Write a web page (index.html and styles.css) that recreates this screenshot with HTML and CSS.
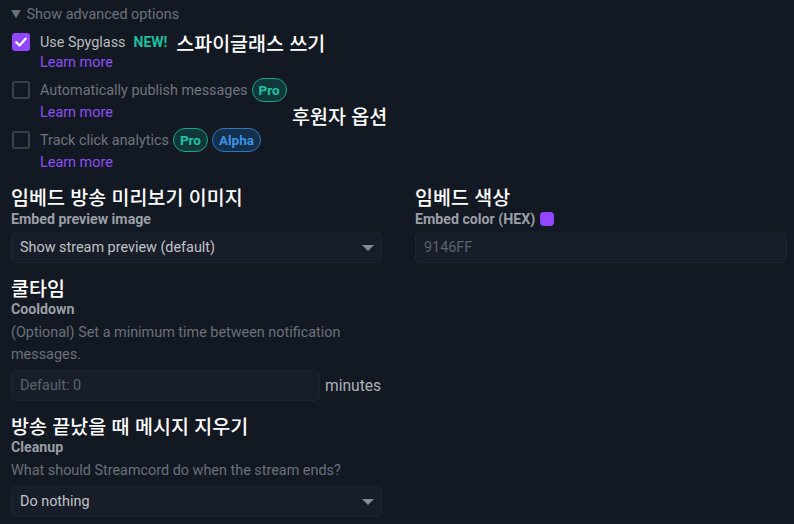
FILE: index.html
```html
<!DOCTYPE html>
<html lang="ko">
<head>
<meta charset="utf-8">
<link rel="stylesheet" href="styles.css">
</head>
<body>
<div class="page">
  <div class="adv-toggle"><span class="tri">▼</span> Show advanced options</div>

  <div class="options">
    <div class="opt">
      <div class="opt-line">
        <span class="cb checked"><svg viewBox="0 0 18 18" width="18" height="18"><path d="M4.2 9.2 L7.6 12.4 L13.8 5.6" fill="none" stroke="#fff" stroke-width="2.2" stroke-linecap="round" stroke-linejoin="round"/></svg></span>
        <span class="opt-label on">Use Spyglass</span>
        <span class="new">NEW!</span>
        <span class="ko-note">스파이글래스 쓰기</span>
      </div>
      <a class="learn">Learn more</a>
    </div>
    <div class="opt">
      <div class="opt-line tall">
        <span class="cb"></span>
        <span class="opt-label">Automatically publish messages</span>
        <span class="badge pro">Pro</span>
      </div>
      <a class="learn">Learn more</a>
    </div>
    <div class="opt">
      <div class="opt-line tall">
        <span class="cb"></span>
        <span class="opt-label">Track click analytics</span>
        <span class="badge pro">Pro</span>
        <span class="badge alpha">Alpha</span>
      </div>
      <a class="learn">Learn more</a>
    </div>
    <span class="ko-float">후원자 옵션</span>
  </div>

  <div class="grid">
    <div class="field">
      <div class="ko-head">임베드 방송 미리보기 이미지</div>
      <div class="label">Embed preview image</div>
      <div class="select"><span>Show stream preview (default)</span><span class="caret"></span></div>
    </div>
    <div class="field">
      <div class="ko-head">임베드 색상</div>
      <div class="label">Embed color (HEX) <span class="swatch"></span></div>
      <div class="input"><span class="ph">9146FF</span></div>
    </div>
    <div class="field">
      <div class="ko-head">쿨타임</div>
      <div class="label tight">Cooldown</div>
      <div class="desc">(Optional) Set a minimum time between notification messages.</div>
      <div class="input-row">
        <div class="input short"><span class="ph">Default: 0</span></div>
        <span class="unit">minutes</span>
      </div>
    </div>
    <div class="empty"></div>
    <div class="field">
      <div class="ko-head">방송 끝났을 때 메시지 지우기</div>
      <div class="label tight">Cleanup</div>
      <div class="desc">What should Streamcord do when the stream ends?</div>
      <div class="select"><span>Do nothing</span><span class="caret"></span></div>
    </div>
  </div>
</div>
</body>
</html>
```

FILE: styles.css
```css
* { box-sizing: border-box; }
html, body { margin: 0; padding: 0; }
body {
  background: #131923;
  font-family: Roboto, "Noto Sans CJK KR", sans-serif;
  color: #b9bbbe;
  width: 794px;
  height: 524px;
  overflow: hidden;
}
.page { padding: 5px 7px 0 11px; }

.adv-toggle {
  font-size: 14.4px;
  line-height: 20px;
  color: #6d727c;
}
.tri { font-size: 10px; display: inline-block; transform: translateY(-1px); margin-right: 2px; }

.options { position: relative; margin-top: 6px; }
.opt { display: flex; flex-direction: column; margin-bottom: 5px; }
.opt-line { display: flex; align-items: center; height: 20px; }
.opt-line.tall { height: 24px; }
.cb {
  width: 18px; height: 18px;
  border: 2px solid #3a404b;
  border-radius: 3px;
  margin-left: 1px;
  margin-right: 10px;
  flex: none;
  display: flex;
}
.cb.checked { background: #9146ff; border: none; }
.opt-label { font-size: 14.4px; color: #6f747e; }
.opt-label.on { color: #b9bbbe; }
.new { color: #1dbf9f; font-weight: 700; font-size: 14px; margin-left: 8px; }
.ko-note {
  font-family: "Noto Sans CJK KR", sans-serif;
  color: #fff; font-size: 19.5px; font-weight: 500;
  margin-left: 9px;
}
.learn {
  font-size: 14.4px; line-height: 20px;
  color: #8f4ef5;
  margin-left: 29px;
  margin-top: 1px;
}
.badge {
  height: 24px;
  border-radius: 12px;
  font-size: 13.5px; font-weight: 700;
  padding: 0 6px;
  display: inline-flex; align-items: center;
  margin-left: 4px;
}
.badge.pro { background: #10373a; border: 1px solid #17a88a; color: #1fc3a0; }
.badge.alpha { background: #14304c; border: 1px solid #2c78bf; color: #3d92e0; }
.ko-float {
  position: absolute;
  left: 281px; top: 71px;
  font-family: "Noto Sans CJK KR", sans-serif;
  color: #fff; font-size: 19.5px; font-weight: 500;
  line-height: 26px;
}

.grid {
  display: grid;
  grid-template-columns: 371px 372px;
  column-gap: 33px;
  margin-top: 11px;
}
.field { display: flex; flex-direction: column; margin-bottom: 12px; }
.ko-head {
  font-family: "Noto Sans CJK KR", sans-serif;
  color: #fff; font-size: 19.5px; font-weight: 500;
  line-height: 26px;
}
.label {
  font-size: 14.2px; font-weight: 700; line-height: 18px;
  color: #9a9ea6;
  display: flex; align-items: center;
}
.label.tight { margin-top: -1px; margin-bottom: 1px; }
.swatch {
  width: 14px; height: 14px; border-radius: 4px;
  background: #9146ff; margin-left: 5px;
}
.select, .input {
  height: 31px;
  background: #181e29;
  border: 1px solid #1d2431;
  border-radius: 5px;
  display: flex; align-items: center; justify-content: space-between;
  padding: 0 7px 0 8px;
  font-size: 14.4px;
  color: #c0c3c8;
  margin-top: 4px;
}
.caret {
  width: 0; height: 0;
  border-left: 6px solid transparent;
  border-right: 6px solid transparent;
  border-top: 6px solid #878b94;
}
.ph { color: #5c626d; font-size: 14.4px; }
.desc {
  font-size: 14.4px; line-height: 22px;
  color: #6b707a;
  margin-top: 3px;
}
.input-row { display: flex; align-items: center; gap: 5px; margin-top: 4px; }
.input.short { width: 309px; margin-top: 0; }
.unit { font-size: 15.6px; color: #aeb1b7; }
```
